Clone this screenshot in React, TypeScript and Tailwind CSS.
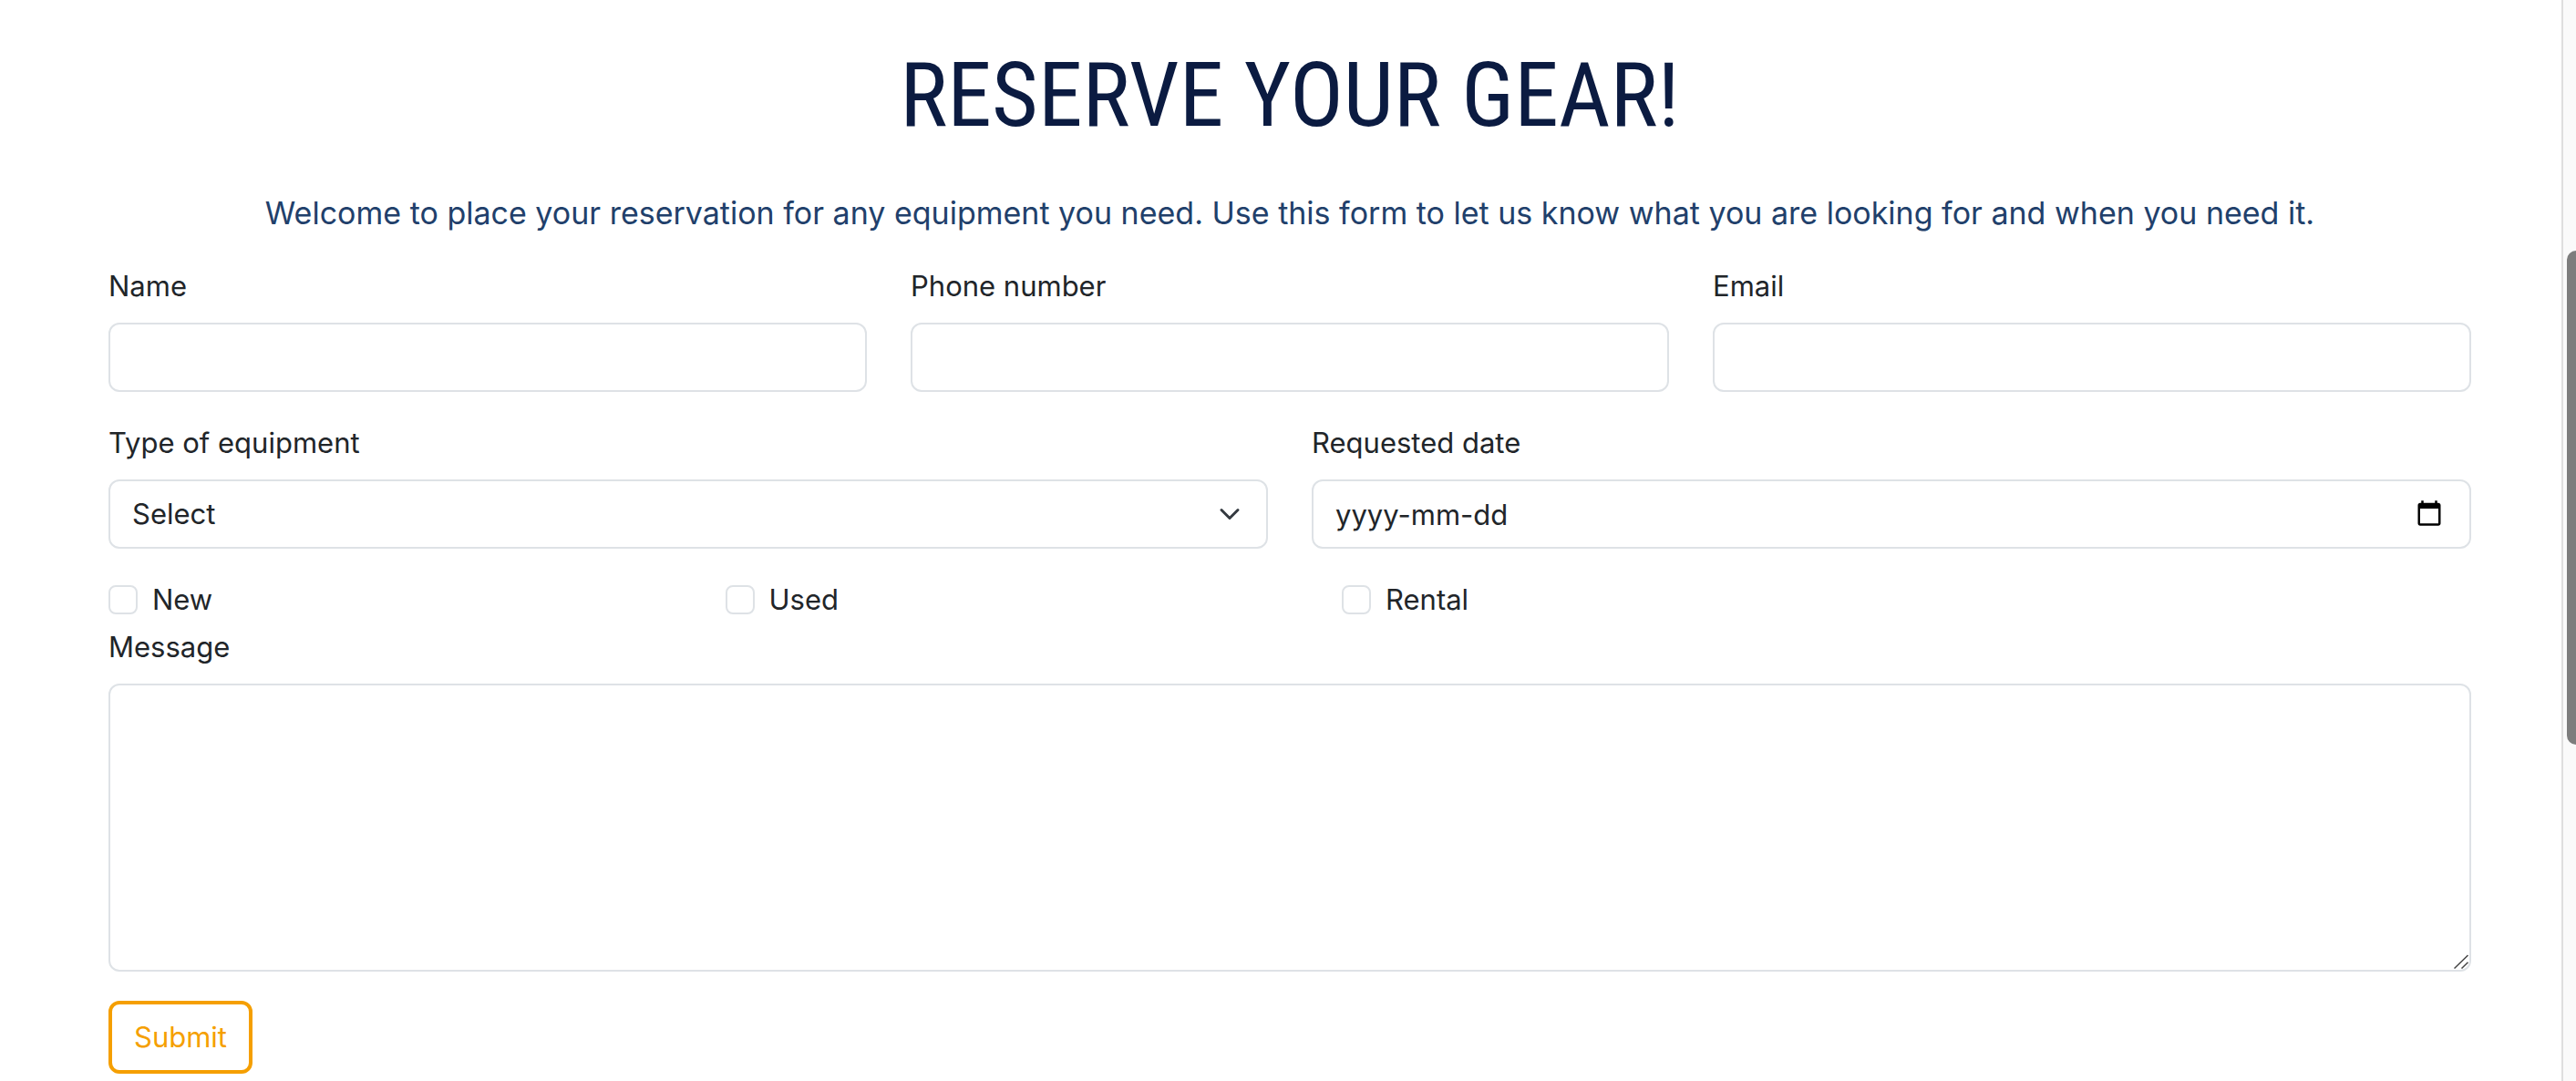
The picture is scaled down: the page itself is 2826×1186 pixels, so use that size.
import type { ReactNode } from 'react';

const control =
  'block h-[76px] w-full appearance-none rounded-[12px] border-2 border-[#dee2e6] bg-white px-6 text-[31px] leading-[48px] text-[#212529] outline-none placeholder:text-[#212529] placeholder:opacity-100';

function Field({ id, label, children }: { id: string; label: string; children: ReactNode }) {
  return (
    <div>
      <label htmlFor={id} className="mb-4 block">
        {label}
      </label>
      {children}
    </div>
  );
}

function Check({ id, label }: { id: string; label: string }) {
  return (
    <div className="flex items-center gap-4">
      <input
        id={id}
        type="checkbox"
        className="size-8 appearance-none rounded-[8px] border-2 border-[#dee2e6] bg-white checked:bg-[#0d6efd]"
      />
      <label htmlFor={id}>{label}</label>
    </div>
  );
}

export default function App() {
  return (
    <div className="flex min-h-screen overflow-hidden bg-white font-['Inter','Liberation_Sans',sans-serif] text-[31px] leading-[48px] text-[#212529]">
      <main className="min-w-0 flex-1 pt-12 pr-[99px] pl-[119px]">
        <h1 className="mb-12 text-center font-['Roboto_Condensed','Liberation_Sans_Narrow',sans-serif] text-[98px] leading-[114px] text-[#0b1b41]">
          RESERVE YOUR GEAR!
        </h1>
        <p className="mb-8 text-center text-[34px] leading-[48px] text-[#21406b]">
          Welcome to place your reservation for any equipment you need. Use this form to let us know what you are
          looking for and when you need it.
        </p>
        <form onSubmit={(e) => e.preventDefault()}>
          <div className="mb-8 grid grid-cols-3 gap-12">
            <Field id="name" label="Name">
              <input id="name" type="text" className={control} />
            </Field>
            <Field id="phone" label="Phone number">
              <input id="phone" type="tel" className={control} />
            </Field>
            <Field id="email" label="Email">
              <input id="email" type="email" className={control} />
            </Field>
          </div>
          <div className="mb-8 grid grid-cols-2 gap-12">
            <Field id="equipment" label="Type of equipment">
              <div className="relative">
                <select id="equipment" className={control}>
                  <option>Select</option>
                  <option>Skis</option>
                  <option>Snowboard</option>
                </select>
                <svg
                  viewBox="0 0 16 16"
                  className="pointer-events-none absolute top-[26px] right-[30px] size-6"
                  fill="none"
                  stroke="#343a40"
                  strokeWidth="2"
                  strokeLinecap="round"
                  strokeLinejoin="round"
                  aria-hidden="true"
                >
                  <path d="m2 5 6 6 6-6" />
                </svg>
              </div>
            </Field>
            <Field id="date" label="Requested date">
              <div className="relative">
                <input id="date" type="text" placeholder="yyyy-mm-dd" className={control} />
                <button type="button" aria-label="Open calendar" className="absolute top-[22px] right-[31px]">
                  <svg viewBox="0 0 24 24" className="size-[30px]" fill="#000" aria-hidden="true">
                    <path d="M20 3h-1V1h-2v2H7V1H5v2H4c-1.1 0-2 .9-2 2v16c0 1.1.9 2 2 2h16c1.1 0 2-.9 2-2V5c0-1.1-.9-2-2-2zm0 18H4V8h16v13z" />
                  </svg>
                </button>
              </div>
            </Field>
          </div>
          <div className="mb-1 grid grid-cols-4 gap-[114px]">
            <Check id="new" label="New" />
            <Check id="used" label="Used" />
            <Check id="rental" label="Rental" />
          </div>
          <Field id="message" label="Message">
            <div className="relative mb-8">
              <textarea
                id="message"
                className="block h-[316px] w-full resize-none rounded-[12px] border-2 border-[#dee2e6] bg-white px-6 py-3 outline-none"
              />
              <svg
                viewBox="0 0 16 16"
                className="pointer-events-none absolute right-[3px] bottom-[3px] size-4"
                fill="none"
                stroke="#444"
                strokeWidth="1.5"
                aria-hidden="true"
              >
                <path d="M.5 15.5 15.5 1M8.500 15.500 15.500 8.800" />
              </svg>
            </div>
          </Field>
          <button
            type="submit"
            className="block h-20 rounded-[12px] border-4 border-[#f59f00] px-6 text-[#f59f00]"
          >
            Submit
          </button>
        </form>
      </main>
      <div className="w-4 border-l-2 border-[#dedede] bg-[#fafafa] pt-[275px] pl-1" aria-hidden="true">
        <div className="h-[542px] rounded-l-[12px] bg-[#7d7d7d]" />
      </div>
    </div>
  );
}
